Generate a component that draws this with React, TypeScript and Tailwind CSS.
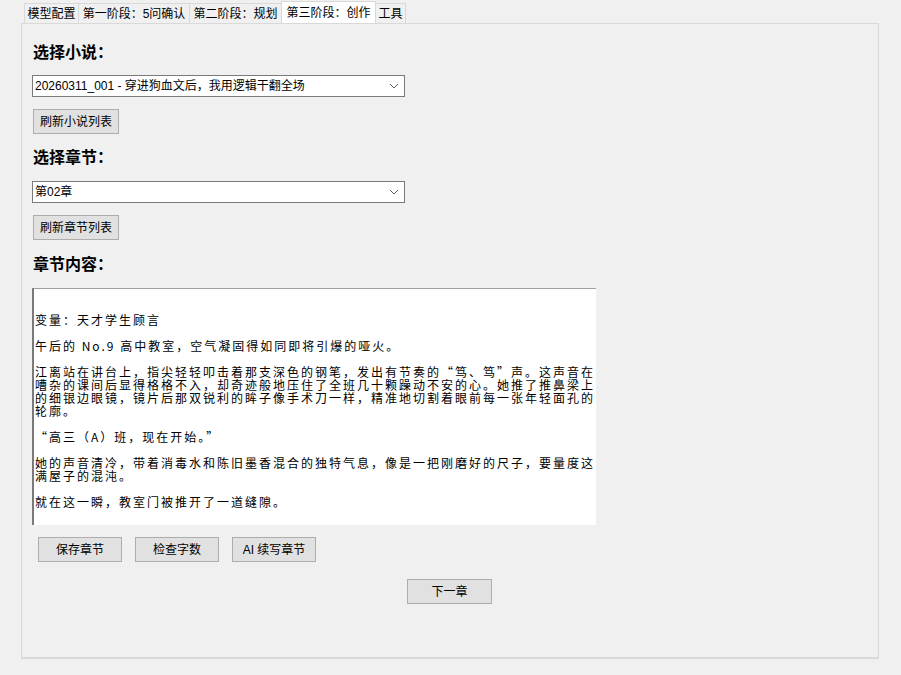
const ui = "font-['Liberation_Sans','Noto_Sans_CJK_SC',sans-serif]"

const tabs = [
  { label: "模型配置", w: "w-[55px]", active: false },
  { label: "第一阶段：5问确认", w: "w-[112px]", active: false },
  { label: "第二阶段：规划", w: "w-[93px]", active: false },
  { label: "第三阶段：创作", w: "w-[95px]", active: true },
  { label: "工具", w: "w-[31px]", active: false },
]

const contentLines = [
  "",
  "",
  "变量：天才学生顾言",
  "",
  "午后的 No.9 高中教室，空气凝固得如同即将引爆的哑火。",
  "",
  "江离站在讲台上，指尖轻轻叩击着那支深色的钢笔，发出有节奏的“笃、笃”声。这声音在",
  "嘈杂的课间后显得格格不入，却奇迹般地压住了全班几十颗躁动不安的心。她推了推鼻梁上",
  "的细银边眼镜，镜片后那双锐利的眸子像手术刀一样，精准地切割着眼前每一张年轻面孔的",
  "轮廓。",
  "",
  "“高三（A）班，现在开始。”",
  "",
  "她的声音清冷，带着消毒水和陈旧墨香混合的独特气息，像是一把刚磨好的尺子，要量度这",
  "满屋子的混沌。",
  "",
  "就在这一瞬，教室门被推开了一道缝隙。",
]

function Chevron() {
  return (
    <svg width="10" height="6" viewBox="0 0 10 6" className="shrink-0">
      <polyline points="1,1 5,5 9,1" fill="none" stroke="#606060" strokeWidth="1" />
    </svg>
  )
}

function Combo({ value }: { value: string }) {
  return (
    <div className="ml-[10px] w-[373px] h-[22px] bg-white border border-[#7a7a7a] flex items-center pl-[2px] pr-[5px]">
      <span className="flex-1 text-[12px] leading-none text-black whitespace-nowrap">{value}</span>
      <Chevron />
    </div>
  )
}

function Btn({ label, className }: { label: string; className: string }) {
  return (
    <div
      className={`h-[25px] bg-[#e1e1e1] border border-[#adadad] flex items-center justify-center text-[12px] text-black whitespace-nowrap ${className}`}
    >
      {label}
    </div>
  )
}

function Heading({ text, className }: { text: string; className: string }) {
  return (
    <div className={`ml-[11px] text-[16px] leading-[20px] font-bold text-black ${className}`}>{text}</div>
  )
}

export default function App() {
  return (
    <div className={`w-[901px] h-[675px] bg-[#f0f0f0] overflow-hidden ${ui}`}>
      {/* tab strip */}
      <div className="flex items-end h-[23px] pl-[24px]">
        {tabs.map((t) => (
          <div
            key={t.label}
            className={`${t.w} flex items-center justify-center text-[12px] text-black whitespace-nowrap border-t border-l border-r border-[#d9d9d9] -mr-px ${
              t.active ? "h-[22px] bg-white relative z-10" : "h-[20px] bg-[#f0f0f0]"
            }`}
          >
            {t.label}
          </div>
        ))}
      </div>

      {/* panel */}
      <div className="ml-[21px] w-[858px] h-[636px] border border-[#d9d9d9] border-b-2 flex flex-col">
        <Heading text="选择小说：" className="mt-[19px]" />
        <div className="mt-[12px]">
          <Combo value="20260311_001 - 穿进狗血文后，我用逻辑干翻全场" />
        </div>
        <Btn label="刷新小说列表" className="mt-[12px] ml-[11px] w-[86px]" />

        <Heading text="选择章节：" className="mt-[14px]" />
        <div className="mt-[13px]">
          <Combo value="第02章" />
        </div>
        <Btn label="刷新章节列表" className="mt-[12px] ml-[11px] w-[86px] h-[24px]" />

        <Heading text="章节内容：" className="mt-[15px]" />

        {/* text area */}
        <div className="mt-[13px] ml-[10px] w-[564px] h-[237px] bg-white border-t border-t-[#a0a0a0] border-l-2 border-l-[#7a7a7a] pl-[1px] overflow-hidden">
          <div className="-mt-[2px] font-['Noto_Sans_CJK_SC',sans-serif] text-[12px] leading-[13px] tracking-[2px] text-black">
            {contentLines.map((line, i) => (
              <div key={i} className="h-[13px] whitespace-nowrap">
                {line}
              </div>
            ))}
          </div>
        </div>

        <div className="flex mt-[12px] ml-[16px] gap-[13px]">
          <Btn label="保存章节" className="w-[84px]" />
          <Btn label="检查字数" className="w-[84px]" />
          <Btn label="AI 续写章节" className="w-[84px]" />
        </div>

        <Btn label="下一章" className="mt-[17px] ml-[385px] w-[85px]" />
      </div>
    </div>
  )
}
